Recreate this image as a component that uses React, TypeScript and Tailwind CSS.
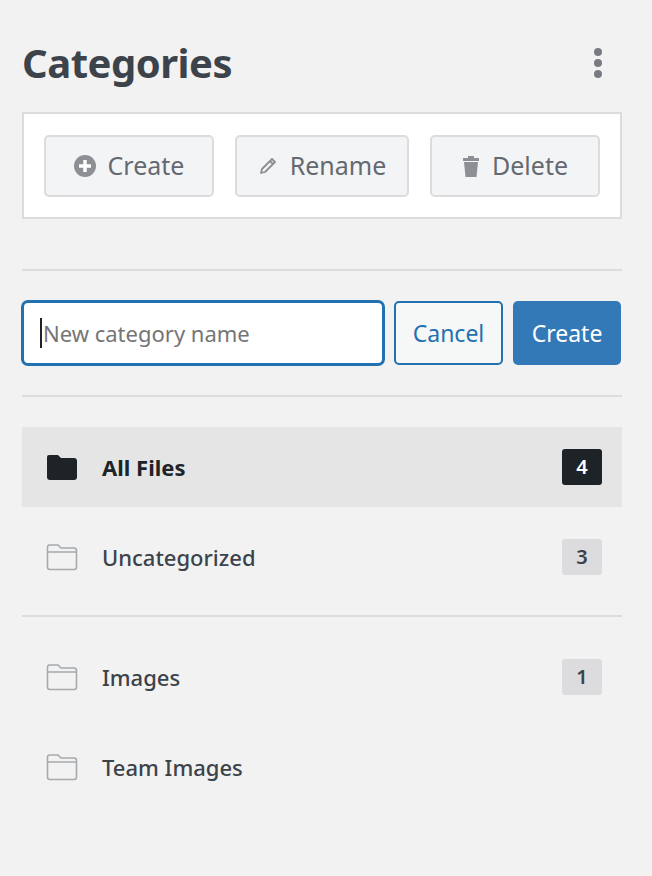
import React from "react";

const Folder = ({ filled }: { filled?: boolean }) => (
  <svg width="32" height="28" viewBox="0 0 32 28">
    {filled ? (
      <path d="M3 2h9l3 3h13a3 3 0 0 1 3 3v16a3 3 0 0 1-3 3H4a3 3 0 0 1-3-3V4a2 2 0 0 1 2-2z" fill="#1d2327" />
    ) : (
      <path d="M3 2h9l3 3h13a2.5 2.5 0 0 1 2.5 2.5v16.5a2.5 2.5 0 0 1-2.5 2.5H4a2.5 2.5 0 0 1-2.5-2.5V4A2 2 0 0 1 3 2zM1.5 9h29" fill="none" stroke="#a7aaad" strokeWidth="1.6" />
    )}
  </svg>
);

const Row = ({ name, count, active }: { name: string; count?: number; active?: boolean }) => (
  <div className={`flex items-center h-[80px] pl-6 pr-5 ${active ? "bg-[#e5e5e5]" : ""}`}>
    <Folder filled={active} />
    <span className={`ml-6 text-[22px] ${active ? "font-bold text-[#1d2327]" : "font-medium text-[#3c434a]"}`}>{name}</span>
    {count !== undefined && (
      <span className={`ml-auto w-10 h-9 rounded-[3px] flex items-center justify-center text-[20px] font-semibold ${active ? "bg-[#1d2327] text-white" : "bg-[#dcdcde] text-[#3c434a]"}`}>{count}</span>
    )}
  </div>
);

const Btn = ({ icon, label, w }: { icon: React.ReactNode; label: string; w: string }) => (
  <button className={`${w} h-[62px] flex items-center justify-center gap-3 bg-[#f3f4f6] border-2 border-[#dcdcde] rounded-[5px] text-[25px] text-[#646970]`}>
    {icon}
    {label}
  </button>
);

export default function App() {
  return (
    <div className="min-h-[876px] bg-[#f2f2f2] pl-[22px] pr-[30px] pt-[38px] font-['Liberation_Sans',sans-serif]">
      <div className="flex items-center justify-between h-[50px]">
        <h1 className="text-[40px] font-bold text-[#3c434a] tracking-[-0.5px]">Categories</h1>
        <svg width="10" height="32" viewBox="0 0 10 32" className="mr-[19px]">
          <circle cx="5" cy="5" r="4" fill="#787c82" />
          <circle cx="5" cy="16" r="4" fill="#787c82" />
          <circle cx="5" cy="27" r="4" fill="#787c82" />
        </svg>
      </div>
      <div className="mt-[24px] h-[107px] bg-white border-2 border-[#dcdcde] flex items-center px-[20px] gap-[21px]">
        <Btn w="w-[170px]" label="Create" icon={
          <svg width="22" height="22" viewBox="0 0 22 22"><circle cx="11" cy="11" r="11" fill="#8c8f94" /><path d="M11 5v12M5 11h12" stroke="#fff" strokeWidth="3.5" /></svg>
        } />
        <Btn w="w-[174px]" label="Rename" icon={
          <svg width="20" height="20" viewBox="0 0 20 20"><path d="M3 17l1-4L14 3l3 3L7 16z M12 5l3 3" fill="none" stroke="#8c8f94" strokeWidth="1.8" strokeLinejoin="round" /></svg>
        } />
        <Btn w="w-[170px]" label="Delete" icon={
          <svg width="18" height="22" viewBox="0 0 18 22"><path d="M6 1h6v2h5v3H1V3h5z" fill="#8c8f94" /><path d="M2 7h14l-1.5 15h-11z" fill="#8c8f94" /></svg>
        } />
      </div>
      <div className="mt-[50px] border-t-2 border-[#dcdcde]" />
      <div className="mt-[30px] flex gap-[10px] h-[64px]">
        <div className="w-[362px] bg-white border-2 border-[#2271b1] rounded-[6px] shadow-[0_0_0_1px_#2271b1] flex items-center pl-4 text-[22px] text-[#757575]">
          <span className="w-[2px] h-[30px] bg-[#1d2327] mr-[1px]" />New category name
        </div>
        <button className="w-[109px] border-2 border-[#2271b1] rounded-[5px] bg-[#f6f7f7] text-[#2271b1] text-[23px]">Cancel</button>
        <button className="w-[108px] rounded-[5px] bg-[#3379b7] text-white text-[23px]">Create</button>
      </div>
      <div className="mt-[30px] border-t-2 border-[#dcdcde]" />
      <div className="mt-[30px] flex flex-col gap-[10px]">
        <Row name="All Files" count={4} active />
        <Row name="Uncategorized" count={3} />
      </div>
      <div className="mt-[18px] border-t-2 border-[#dcdcde]" />
      <div className="mt-[20px] flex flex-col gap-[10px]">
        <Row name="Images" count={1} />
        <Row name="Team Images" />
      </div>
    </div>
  );
}
